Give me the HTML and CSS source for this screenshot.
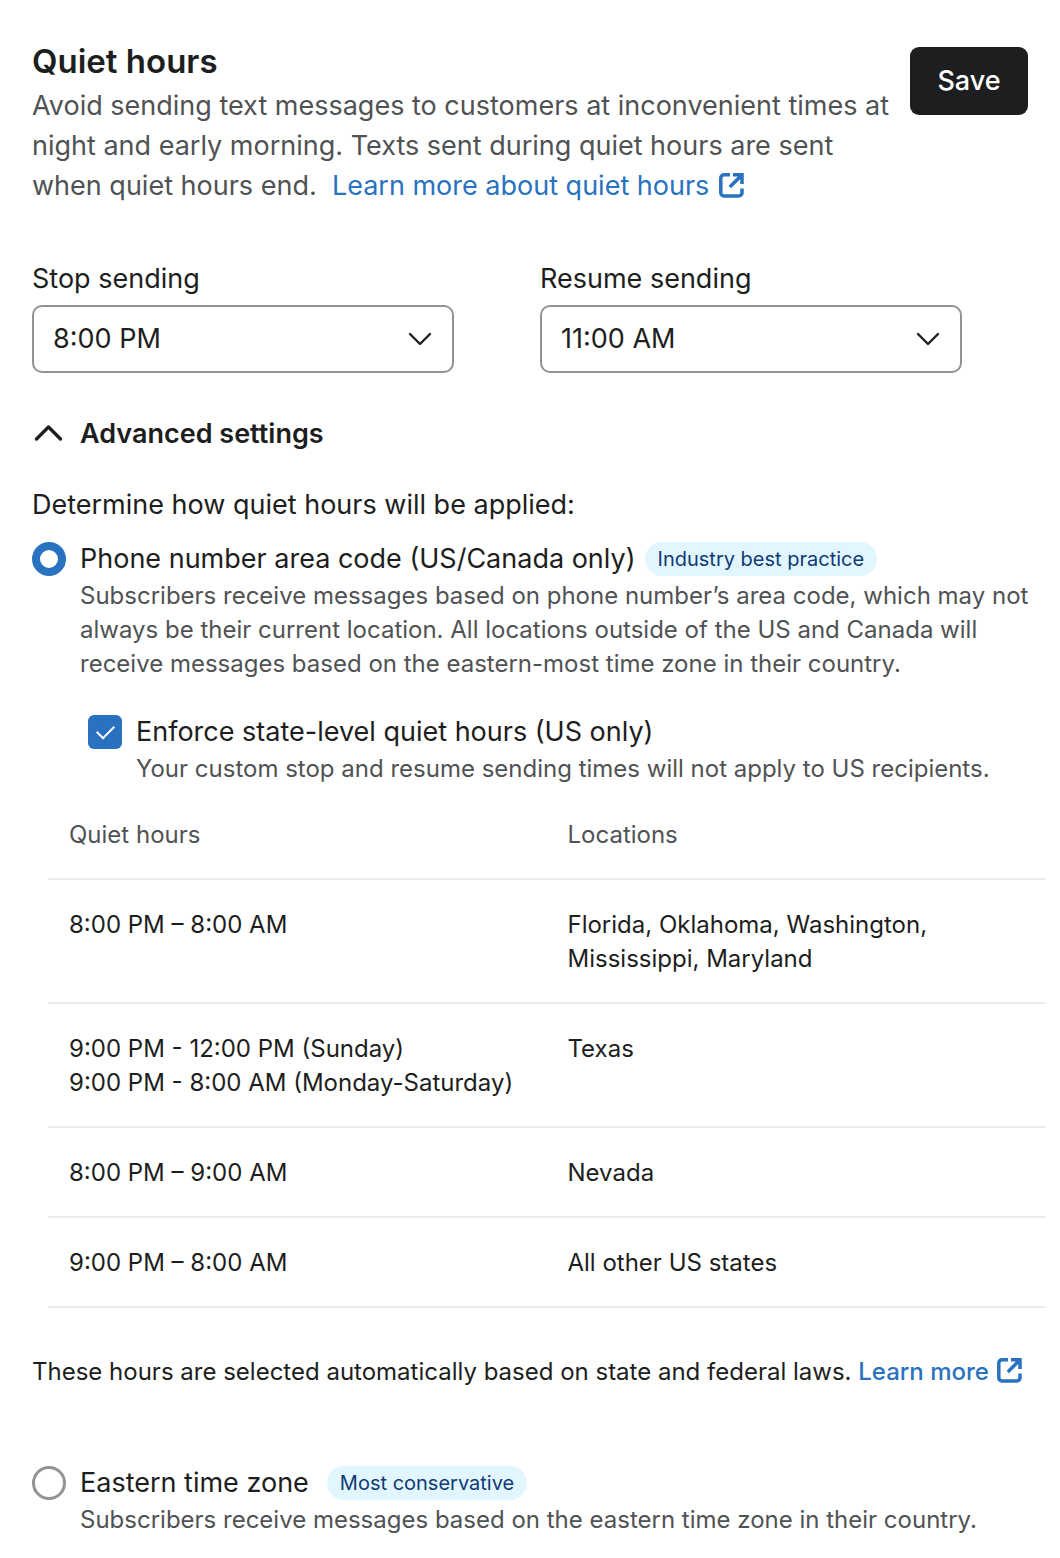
FILE: index.html
```html
<!DOCTYPE html>
<html lang="en">
  <head>
    <meta charset="utf-8" />
    <meta name="viewport" content="width=device-width, initial-scale=1" />
    <title>Quiet hours</title>
    <link rel="stylesheet" href="styles.css">
  </head>
  <body>
    <svg class="sprite" aria-hidden="true">
      <symbol id="external" viewBox="0 0 25 25">
        <path d="M11 1.8H5A3.2 3.2 0 0 0 1.8 5v14.8A3.2 3.2 0 0 0 5 23h14.8a3.2 3.2 0 0 0 3.2-3.2V15.4" />
        <path d="M10.8 14 22.5 2.3M14 1.8h9v9.2" />
      </symbol>
      <symbol id="chevron" viewBox="0 0 24 14">
        <path d="M2 2l10 10L22 2" />
      </symbol>
    </svg>

    <main class="page">
      <header class="header">
        <div>
          <h1>Quiet hours</h1>
          <p class="intro">
            Avoid sending text messages to customers at inconvenient times at
            night and early morning. Texts sent during quiet hours are sent
            when quiet hours end.&nbsp;
            <a href="#">Learn more about quiet hours <svg class="external"><use href="#external" /></svg></a>
          </p>
        </div>
        <button class="save" type="button">Save</button>
      </header>

      <div class="times">
        <div>
          <label for="stop">Stop sending</label>
          <div class="select">
            <select id="stop">
              <option>8:00 PM</option>
            </select>
            <svg class="chevron"><use href="#chevron" /></svg>
          </div>
        </div>
        <div>
          <label for="resume">Resume sending</label>
          <div class="select">
            <select id="resume">
              <option>11:00 AM</option>
            </select>
            <svg class="chevron"><use href="#chevron" /></svg>
          </div>
        </div>
      </div>

      <button class="advanced" type="button" aria-expanded="true">
        <svg viewBox="0 0 34 34"><path d="M4.5 22l12-12 12 12" /></svg>
        Advanced settings
      </button>

      <p class="prompt">Determine how quiet hours will be applied:</p>

      <div class="option">
        <input type="radio" name="apply" id="area" checked />
        <div>
          <div class="title">
            <label for="area">Phone number area code (US/Canada only)</label>
            <span class="badge">Industry best practice</span>
          </div>
          <p class="help">
            Subscribers receive messages based on phone number’s area code,
            which may not always be their current location. All locations
            outside of the US and Canada will receive messages based on the
            eastern-most time zone in their country.
          </p>
        </div>
      </div>

      <div class="option nested">
        <input type="checkbox" id="enforce" checked />
        <div>
          <div class="title">
            <label for="enforce">Enforce state-level quiet hours (US only)</label>
          </div>
          <p class="help">Your custom stop and resume sending times will not apply to US recipients.</p>
        </div>
      </div>

      <table class="hours">
        <thead>
          <tr>
            <th>Quiet hours</th>
            <th>Locations</th>
          </tr>
        </thead>
        <tbody>
          <tr>
            <td>8:00 PM – 8:00 AM</td>
            <td>Florida, Oklahoma, Washington, Mississippi, Maryland</td>
          </tr>
          <tr>
            <td>9:00 PM - 12:00 PM (Sunday)<br />9:00 PM - 8:00 AM (Monday-Saturday)</td>
            <td>Texas</td>
          </tr>
          <tr>
            <td>8:00 PM – 9:00 AM</td>
            <td>Nevada</td>
          </tr>
          <tr>
            <td>9:00 PM – 8:00 AM</td>
            <td>All other US states</td>
          </tr>
        </tbody>
      </table>

      <p class="note">
        These hours are selected automatically based on state and federal laws.
        <a href="#">Learn more <svg class="external"><use href="#external" /></svg></a>
      </p>

      <div class="option">
        <input type="radio" name="apply" id="eastern" />
        <div>
          <div class="title wide">
            <label for="eastern">Eastern time zone</label>
            <span class="badge">Most conservative</span>
          </div>
          <p class="help">Subscribers receive messages based on the eastern time zone in their country.</p>
        </div>
      </div>
    </main>
  </body>
</html>
```
FILE: styles.css
```css
* {
  box-sizing: border-box;
}

body {
  margin: 0;
  background: #fff;
  color: #1d1e20;
  font-family: Inter, "Liberation Sans", sans-serif;
  font-optical-sizing: none;
  font-size: 27px;
  line-height: 40px;
}

h1,
p {
  margin: 0;
}

a {
  color: #2872bf;
  text-decoration: none;
}

button,
select {
  font: inherit;
  color: inherit;
}

.sprite {
  position: absolute;
  width: 0;
  height: 0;
}

.page {
  padding: 36px 15px 20px 32px;
}

.header {
  display: flex;
  justify-content: space-between;
  align-items: flex-start;
  gap: 20px;
  padding-right: 17px;
}

h1 {
  font-size: 33px;
  font-weight: 600;
  line-height: 50px;
}

.intro {
  color: #505254;
}

.external {
  width: 25px;
  height: 25px;
  margin-left: 2px;
  vertical-align: -3px;
  fill: none;
  stroke: #2872bf;
  stroke-width: 3.5;
}

.save {
  flex: none;
  width: 118px;
  height: 68px;
  margin-top: 11px;
  border: 0;
  border-radius: 9px;
  background: #1d1e20;
  color: #fff;
  font-weight: 500;
}

.times {
  display: grid;
  grid-template-columns: 1fr 1fr;
  gap: 86px;
  margin-top: 53px;
  padding-right: 83px;
}

.times label {
  display: block;
}

.select {
  display: grid;
  align-items: center;
  margin-top: 6px;
}

.select > * {
  grid-area: 1 / 1;
}

select {
  width: 100%;
  height: 68px;
  padding: 0 19px;
  border: 2px solid #929394;
  border-radius: 10px;
  background: #fff;
  appearance: none;
}

.chevron {
  justify-self: end;
  width: 24px;
  height: 14px;
  margin-right: 22px;
  fill: none;
  stroke: #1d1e20;
  stroke-width: 2.4;
  stroke-linecap: round;
  stroke-linejoin: round;
  pointer-events: none;
}

.advanced {
  display: flex;
  align-items: center;
  gap: 14px;
  margin-top: 41px;
  padding: 0;
  border: 0;
  background: none;
  font-weight: 600;
}

.advanced svg {
  width: 34px;
  height: 34px;
  fill: none;
  stroke: #1d1e20;
  stroke-width: 3.4;
  stroke-linecap: round;
  stroke-linejoin: round;
}

.prompt {
  margin-top: 31px;
}

.option {
  display: flex;
  gap: 14px;
  margin-top: 14px;
}

.option input {
  flex: none;
  width: 34px;
  height: 34px;
  margin: 3px 0 0;
  appearance: none;
}

.option input[type="radio"] {
  border: 3px solid #929394;
  border-radius: 50%;
}

.option input[type="radio"]:checked {
  border: 8px solid #2872bf;
}

.option input[type="checkbox"] {
  display: grid;
  place-items: center;
  border-radius: 6px;
  background: #2872bf;
}

.option input[type="checkbox"]:checked::before {
  content: "";
  width: 15px;
  height: 8px;
  border: solid #fff;
  border-width: 0 0 2px 2px;
  transform: translateY(-2px) rotate(-45deg);
}

.nested {
  margin: 31px 0 0 56px;
}

.title {
  display: flex;
  align-items: center;
  gap: 9px;
}

.wide {
  gap: 18px;
}

.badge {
  padding: 0 13px;
  border-radius: 17px;
  background: #e1f6fe;
  color: #0f3a75;
  font-size: 20px;
  line-height: 34px;
}

.help {
  color: #505254;
  font-size: 24px;
  line-height: 34px;
}

.hours {
  width: calc(100% - 16px);
  margin: 4px 0 0 16px;
  border-collapse: collapse;
  table-layout: fixed;
  font-size: 24px;
  line-height: 34px;
}

.hours th,
.hours td {
  padding: 28px 21px 26px;
  border-bottom: 2px solid #ebecec;
  text-align: left;
  vertical-align: top;
}

.hours th {
  color: #505254;
  font-weight: 400;
}

.note {
  margin-top: 44px;
  font-size: 24px;
}

.note a {
  font-weight: 500;
}

.note + .option {
  margin-top: 71px;
}
```
